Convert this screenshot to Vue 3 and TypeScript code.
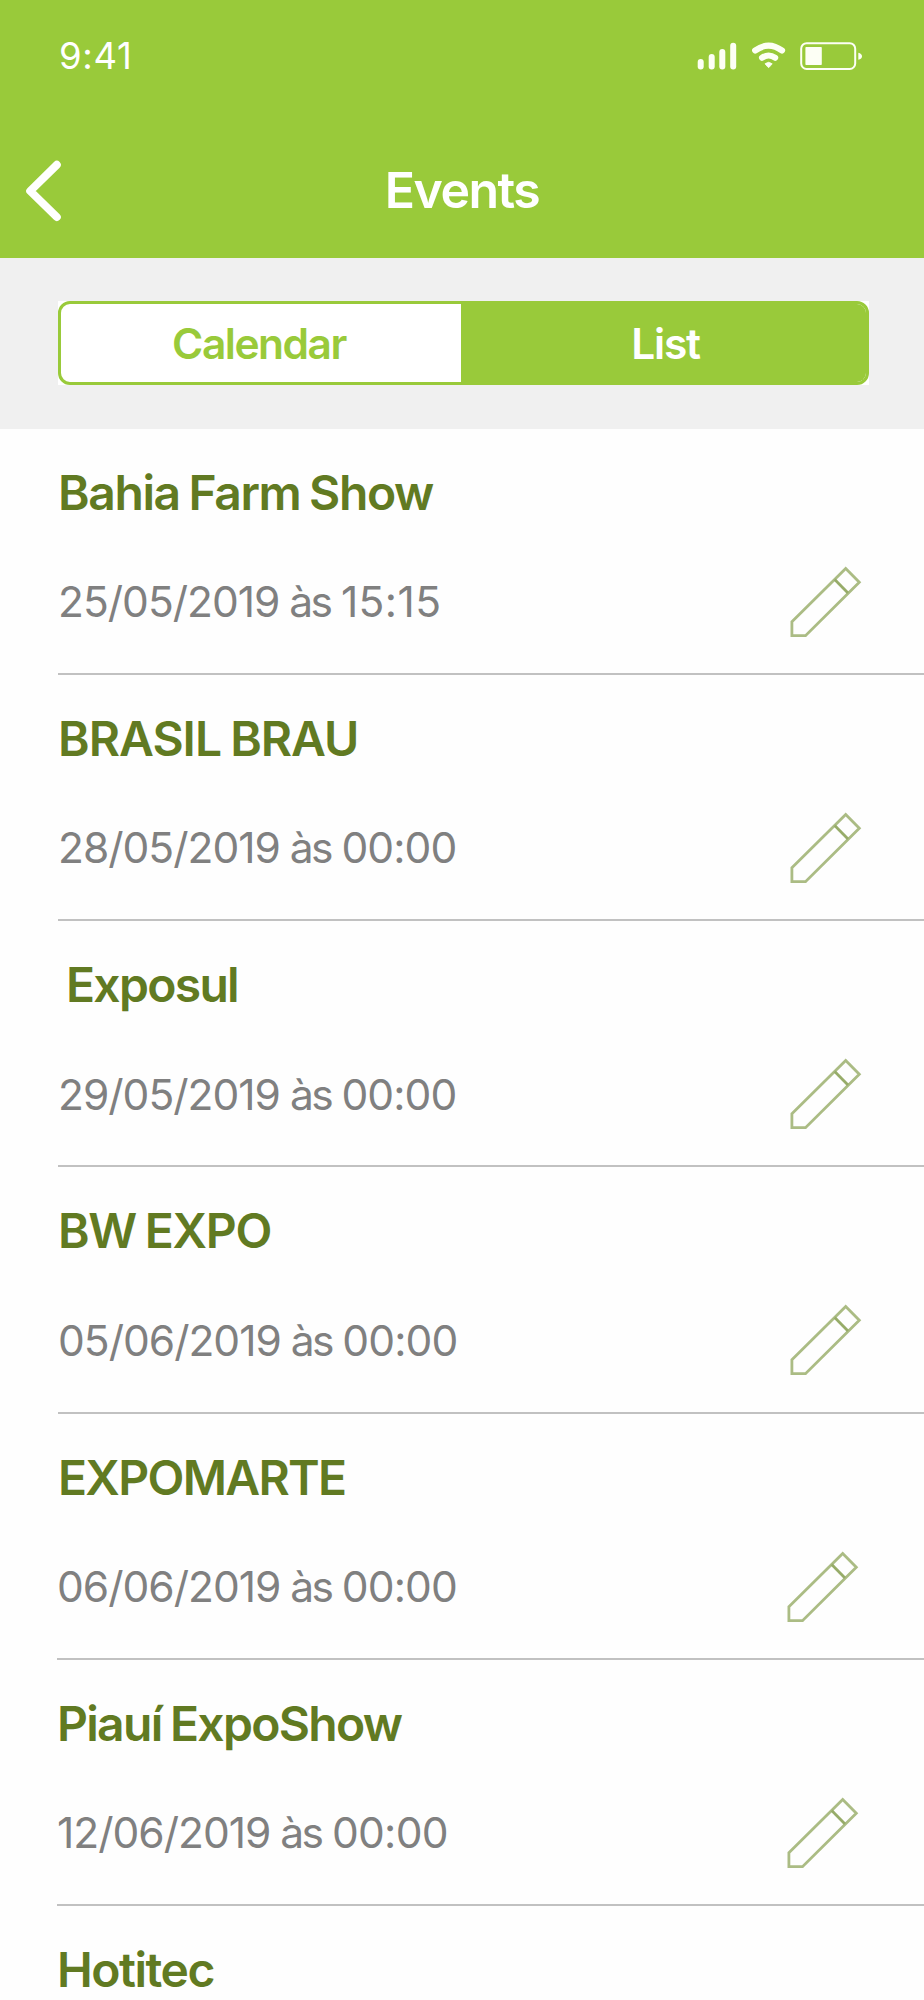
<script setup lang="ts">
interface EventItem {
  title: string
  day: string
  time: string
  titleSpacing: number
  timeSpacing: number
  titleIndent: number
  shift: number
}

const events: EventItem[] = [
  { title: 'Bahia Farm Show', day: '25/05/2019', time: '15:15', titleSpacing: -1.4, timeSpacing: 0.4, titleIndent: 0, shift: 0 },
  { title: 'BRASIL BRAU', day: '28/05/2019', time: '00:00', titleSpacing: -1, timeSpacing: -0.9, titleIndent: 0, shift: 0 },
  { title: 'Exposul', day: '29/05/2019', time: '00:00', titleSpacing: -1.7, timeSpacing: -0.9, titleIndent: 8, shift: 0 },
  { title: 'BW EXPO', day: '05/06/2019', time: '00:00', titleSpacing: -1.3, timeSpacing: -0.9, titleIndent: 0, shift: 0 },
  { title: 'EXPOMARTE', day: '06/06/2019', time: '00:00', titleSpacing: -1.7, timeSpacing: -0.9, titleIndent: 1, shift: -1 },
  { title: 'Piauí ExpoShow', day: '12/06/2019', time: '00:00', titleSpacing: -1.7, timeSpacing: -0.7, titleIndent: 0, shift: -1 },
  { title: 'Hotitec', day: '', time: '', titleSpacing: -1.5, timeSpacing: -1, titleIndent: 0, shift: -1 },
]
</script>

<template>
  <main class="screen">
    <header class="header">
      <div class="status">
        <span class="clock">9:41</span>
        <svg class="indicators" width="168" height="32" viewBox="0 0 168 32" fill="#fdfff5">
          <rect x="0.7" y="17" width="6" height="10.6" rx="3" />
          <rect x="11.7" y="12" width="6" height="15.6" rx="3" />
          <rect x="22.3" y="7" width="6" height="20.6" rx="3" />
          <rect x="33.2" y="0.7" width="6" height="26.9" rx="3" />
          <g fill="none" stroke="#fdfff5" stroke-linecap="round">
            <path d="M58.2 8.5Q71.5-1.4 85 8.5" stroke-width="6.2" />
            <path d="M65 15.8Q71.6 11.2 78.2 15.8" stroke-width="6" />
          </g>
          <path d="M68 21.8Q71.6 18.8 75.2 21.8L72.2 25.2Q71.6 25.8 71 25.2Z" stroke="#fdfff5" stroke-width="0.8" />
          <rect x="104.2" y="1.2" width="54" height="25.8" rx="5.5" fill="none" stroke="#fdfff5" stroke-width="2" />
          <rect x="108.4" y="5" width="16.4" height="18" rx="0.8" />
          <path d="M161.3 10.7Q165 11.7 165 14.2T161.3 17.7Z" />
        </svg>
      </div>
      <nav class="navbar">
        <svg class="back" width="40" height="66" viewBox="0 0 40 66" fill="none" stroke="#fff" stroke-width="8" stroke-linecap="round" stroke-linejoin="round">
          <path d="M34.8 7.8L8.2 34L34.8 60" />
        </svg>
        <h1 class="heading">Events</h1>
      </nav>
    </header>

    <section class="filter">
      <div class="tabs-frame">
        <div class="tabs">
          <div class="tab"><span class="label">Calendar</span></div>
          <div class="tab active"><span class="label">List</span></div>
        </div>
      </div>
    </section>

    <ul class="events">
      <li v-for="event in events" :key="event.title" class="event" :style="{ marginLeft: `${58 + event.shift}px` }">
        <div class="texts">
          <h2 class="title" :style="{ letterSpacing: `${event.titleSpacing}px`, paddingLeft: `${event.titleIndent}px` }">{{ event.title }}</h2>
          <p v-if="event.day" class="date">{{ event.day }} <span class="at">às</span> <span :style="{ letterSpacing: `${event.timeSpacing}px` }">{{ event.time }}</span></p>
        </div>
        <svg v-if="event.day" class="pencil" width="76" height="76" viewBox="0 0 76 76" fill="none" stroke="#abbc84" stroke-width="2.8" :style="{ marginRight: `${60 - event.shift * 3}px` }">
          <path d="M3.9 57.7L57.7 4.5L71.3 18.3L17.5 71.7H3.9Z" />
          <path d="M46.7 15.6L60 29" stroke="#97ac69" />
        </svg>
      </li>
    </ul>
  </main>
</template>

<style>
html,
body {
  margin: 0;
  background: #fff;
}
</style>

<style scoped>
.screen {
  width: 924px;
  height: 2000px;
  overflow: hidden;
  background: #fefefe;
  font-family: Inter, 'Liberation Sans', sans-serif;
}
.header {
  height: 257.5px;
  background: #99ca3a;
  color: #fff;
}
.status {
  display: flex;
  justify-content: space-between;
  height: 124px;
  padding: 0 59px 0 59px;
}
.clock {
  margin-top: 34px;
  font-size: 36.5px;
  line-height: 44px;
  letter-spacing: 0.7px;
}
.indicators {
  margin-top: 42px;
}
.navbar {
  display: grid;
  grid-template-columns: 80px 1fr 80px;
  height: 133px;
}
.back {
  margin: 33px 0 0 22px;
}
.heading {
  margin: 36px 0 0;
  font-size: 50px;
  font-weight: 600;
  line-height: 60px;
  text-align: center;
  letter-spacing: -1.5px;
}
.filter {
  height: 171px;
  box-sizing: border-box;
  padding: 43.5px 55px 0 58px;
  background: #f0f0f0;
}
.tabs-frame {
  background: #fff;
}
.tabs {
  display: grid;
  grid-template-columns: 400px 1fr;
  height: 84px;
  box-sizing: border-box;
  border: 3px solid #99ca3a;
  border-radius: 12px;
  overflow: hidden;
}
.tab {
  display: flex;
  align-items: center;
  justify-content: center;
  padding: 2px 4px 0 0;
  color: #99ca3a;
  font-size: 42.5px;
  font-weight: 600;
  line-height: 50px;
  letter-spacing: -1.5px;
}
.tab.active {
  padding: 2px 0 0 4px;
  background: #99ca3a;
  color: #fff;
  letter-spacing: -1.2px;
}
.events {
  margin: 0;
  padding: 0;
  list-style: none;
}
.event {
  display: flex;
  justify-content: space-between;
  height: 246.25px;
  box-sizing: border-box;
  border-bottom: 2px solid #c1c1c1;
}
.title {
  margin: 35px 0 0;
  font-size: 48px;
  font-weight: 600;
  line-height: 58px;
  color: #617a22;
  white-space: nowrap;
  word-spacing: -2px;
}
.date {
  margin: 55.5px 0 0;
  font-size: 42.5px;
  font-weight: 400;
  line-height: 50px;
  color: #808080;
  white-space: nowrap;
  letter-spacing: -1px;
}
.at {
  margin: 0 -0.5px 0 -1px;
  letter-spacing: -2.6px;
}
.pencil {
  margin-top: 135px;
}
</style>
